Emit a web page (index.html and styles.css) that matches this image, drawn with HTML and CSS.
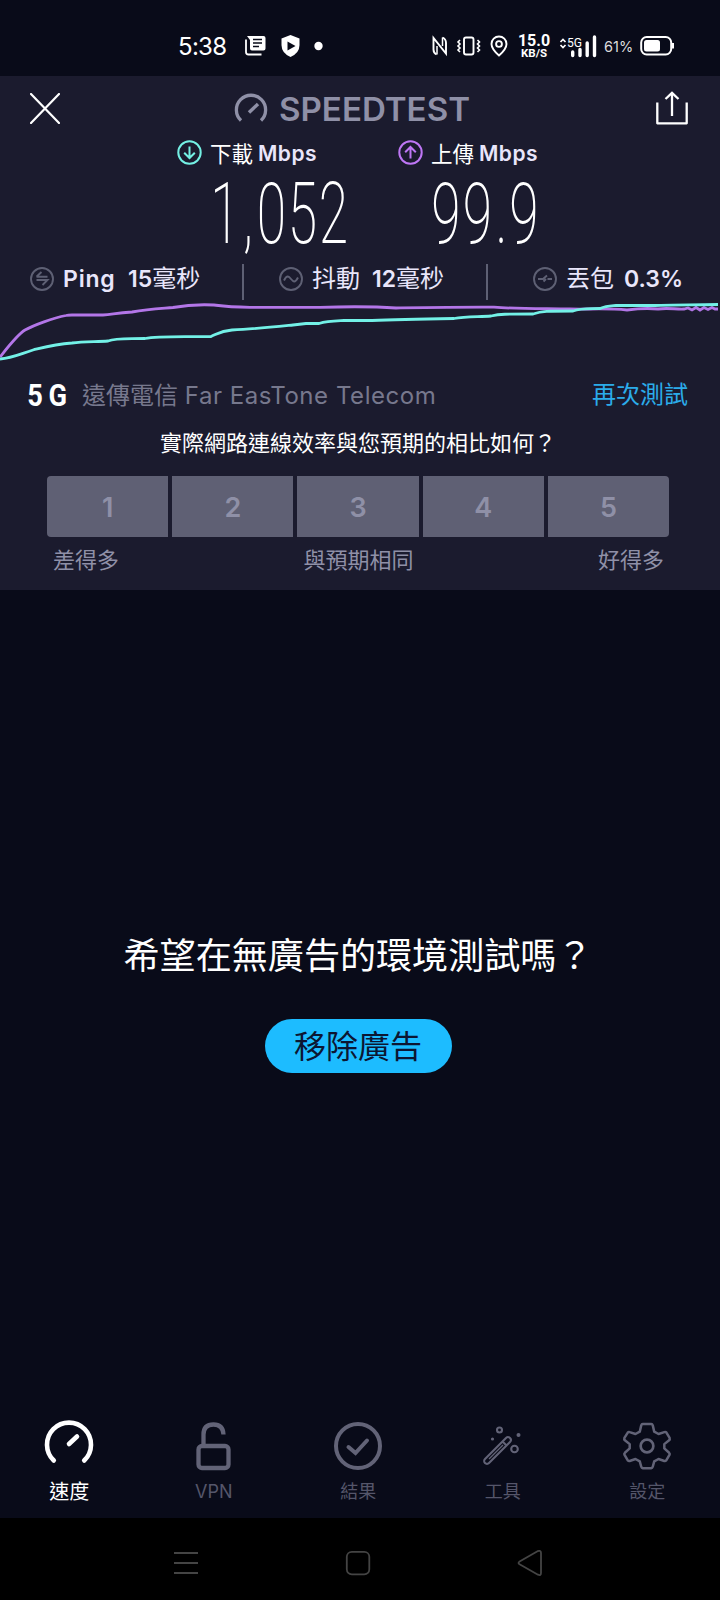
FILE: index.html
```html
<!DOCTYPE html>
<html lang="zh-Hant">
<head>
<meta charset="utf-8">
<title>Speedtest</title>
<link rel="stylesheet" href="styles.css">
</head>
<body>
<div class="status">
  <span class="clock">5:38</span>
  <svg class="left-icons" width="80" height="24" viewBox="0 0 80 24">
    <path d="M2 2H18.500Q20.500 2 20.500 4V14.500Q20.500 16.500 18.500 16.500H7Q5 16.500 5 14.500V6Z" fill="#fff"/>
    <path d="M8 5.500H17M8 9H17M8 12.500H14" stroke="#090b19" stroke-width="1.400"/>
    <path d="M1 5.500V18Q1 20.500 3.500 20.500H16.500" fill="none" stroke="#fff" stroke-width="1.800"/>
    <path d="M45.500 1L54.500 4.500V11Q54.500 19 45.500 23Q36.500 19 36.500 11V4.500Z" fill="#fff"/>
    <path d="M42.500 7.500L50.500 12L42.500 16.500Z" fill="#090b19"/>
    <circle cx="73.500" cy="12" r="4.200" fill="#fff"/>
  </svg>
  <svg class="right-icons" width="78" height="24" viewBox="0 0 78 24" fill="none" stroke="#fff" stroke-width="1.900">
    <path d="M4.500 20.500Q1.500 19 1.500 15.500V4L14 19.500V9Q14 5 10.500 3.500"/>
    <path d="M5 20.500V12M10.500 3.500V12" stroke-width="1.500"/>
    <rect x="32" y="3.500" width="9.500" height="17" rx="2"/>
    <path d="M28 6L26 8L28 10L26 12L28 14L26 16L28 18M45.500 6L47.500 8L45.500 10L47.500 12L45.500 14L47.500 16L45.500 18" stroke-width="1.600"/>
    <path d="M67 21.500Q59.500 15 59.500 10A7.500 7.500 0 0 1 74.500 10Q74.500 15 67 21.500Z"/>
    <circle cx="67" cy="10" r="2.900"/>
  </svg>
  <div class="rate"><b>15.0</b><span>KB/S</span></div>
  <svg class="signal" width="40" height="24" viewBox="0 0 40 24">
    <path d="M1.500 8L4 5.500L6.500 8M1.500 11L4 13.500L6.500 11" fill="none" stroke="#fff" stroke-width="1.700"/>
    <text x="8" y="12.500" class="net" textLength="15" lengthAdjust="spacingAndGlyphs">5G</text>
    <path d="M13.700 18V21.500M21 15.500V21.500M28.200 9V21.500M35.500 3V21.500" stroke="#fff" stroke-width="3.400" stroke-linecap="round"/>
  </svg>
  <span class="pct">61%</span>
  <svg width="35" height="22" viewBox="0 0 35 22">
    <rect x="1.200" y="2" width="30" height="17.500" rx="5.500" fill="none" stroke="#fff" stroke-width="2"/>
    <rect x="4" y="5" width="16" height="11.500" rx="2.500" fill="#fff"/>
    <path d="M33 8V13.500" stroke="#fff" stroke-width="2"/>
  </svg>
</div>

<section class="panel">
  <header class="head">
    <svg width="30" height="31" viewBox="0 0 30 31"><path d="M1 1L29 30M29 1L1 30" stroke="#fff" stroke-width="2.200" stroke-linecap="round"/></svg>
    <svg class="logo" width="246" height="40" viewBox="0 -2 246 40">
      <path d="M7 30.500A14.600 14.600 0 1 1 27 30.500" fill="none" stroke="#8f90a7" stroke-width="3.300"/>
      <path d="M15 22.500L24 14" stroke="#8f90a7" stroke-width="3.400"/>
      <text x="45" y="30.500" textLength="191" lengthAdjust="spacingAndGlyphs">SPEEDTEST</text>
    </svg>
    <svg width="32" height="34" viewBox="0 0 32 34" fill="none" stroke="#fff" stroke-width="2.300"><path d="M1.300 11.500V32.300H30.700V11.500M16 25V2" stroke-linejoin="round"/><path d="M9.500 8L16 1.800L22.500 8"/></svg>
  </header>

  <div class="speeds">
    <div class="speed down">
      <div class="label">
        <svg width="25" height="25" viewBox="0 0 25 25" fill="none" stroke="#74f0e4" stroke-width="2"><circle cx="12.500" cy="12.500" r="11.200"/><path d="M12.500 6.500V18M7.200 12.800L12.500 18L17.800 12.800"/></svg>
        <span>下載</span><b>Mbps</b>
      </div>
      <svg class="value" width="136" height="84" viewBox="0 0 136 84"><text transform="scale(.62 1)" x="-3 50 72 122 172" y="76">1,052</text></svg>
    </div>
    <div class="speed up">
      <div class="label">
        <svg width="25" height="25" viewBox="0 0 25 25" fill="none" stroke="#be76f5" stroke-width="2"><circle cx="12.500" cy="12.500" r="11.200"/><path d="M12.500 18.500V7M7.200 12.200L12.500 7L17.800 12.200"/></svg>
        <span>上傳</span><b>Mbps</b>
      </div>
      <svg class="value" width="106" height="84" viewBox="0 0 106 84"><text transform="scale(.62 1)" x="-3 48 101 123" y="76">99.9</text></svg>
    </div>
  </div>

  <div class="stats">
    <div class="stat ping">
      <svg width="24" height="24" viewBox="0 0 24 24"><circle cx="12" cy="12" r="11"/><path d="M6.500 9.800H17.500M6.500 9.800L11.500 5M6.500 13H17.500L12.500 18"/></svg>
      <b>Ping</b><span><b>15</b>毫秒</span>
    </div>
    <div class="stat jitter">
      <svg width="24" height="24" viewBox="0 0 24 24"><circle cx="12" cy="12" r="11"/><path d="M5 13.500C8 7.500 10 9.500 12 12S16 16.500 19 10.500"/></svg>
      <span>抖動</span><span><b>12</b>毫秒</span>
    </div>
    <div class="stat loss">
      <svg width="24" height="24" viewBox="0 0 24 24"><circle cx="12" cy="12" r="11"/><path d="M5 12H10L14 8.500M10.500 14.500L13 12M14.500 12H19"/></svg>
      <span>丟包</span><b>0.3%</b>
    </div>
  </div>

  <svg class="chart" width="720" height="66" viewBox="0 0 720 66">
    <path stroke="#b376e8" d="M0 57C8 47 17 35 25 30C34 25 53 18 66 15.500Q68 15 72 15H103C112 14.500 116 13 132 12C149 9 162 8.500 173 7.500C184 5.500 194 4 214 5C222 6 228 7 250 7.300H320C347 6.500 375 6.500 396 8C430 7.500 462 7 494 7.200C517 9 545 8.500 570 9C590 9.500 606 8 627 10C638 8.500 648 8 658 9C668 7.500 676 9.500 684 9L688 8L692 10L696 7.500L700 10L704 7.500L708 9.500L712 7.500L715 9H718"/>
    <path stroke="#73f1e7" d="M0 59C12 58 20 54 33 50C45 47 55 44 72 43C84 41 97 42 108 41C116 38 127 39 145 38.500C158 36 178 37 211 36.500C219 33 221 31 232 30C254 29 273 27 293 25L306 23.500H319C327 21 333 21 344 20.500H372C392 19.500 416 19 454 18.500C466 16 479 17 491 16C500 14 505 14 533 14C542 11 547 11 573 11C582 8 590 9 600 8.500C606 6 610 6 616 5.500H655C670 4.500 690 5 718 4.500"/>
  </svg>

  <div class="provider">
    <svg width="46" height="40" viewBox="0 0 46 40"><text class="fiveg" transform="scale(.85 1)" x="-1 24" y="31">5G</text></svg>
    <span class="isp">遠傳電信 <i>Far EasTone Telecom</i></span>
    <a class="again">再次測試</a>
  </div>

  <p class="question">實際網路連線效率與您預期的相比如何？</p>
  <div class="scale"><div>1</div><div>2</div><div>3</div><div>4</div><div>5</div></div>
  <div class="legend"><span>差得多</span><span>與預期相同</span><span>好得多</span></div>
</section>

<main class="ad">
  <h1>希望在無廣告的環境測試嗎？</h1>
  <button>移除廣告</button>
</main>

<nav class="tabs">
  <div class="tab active">
    <svg width="50" height="54" viewBox="0 0 50 54" fill="none" stroke="#fff" stroke-width="4.600" stroke-linecap="round"><path d="M9.800 40.500A22 22 0 1 1 40.200 40.500M25 24L33 16.500"/></svg>
    <span>速度</span>
  </div>
  <div class="tab">
    <svg width="50" height="54" viewBox="0 0 50 54" fill="none" stroke="#626377" stroke-width="4.300"><rect x="9.500" y="26" width="30" height="22" rx="3.500"/><path d="M14.500 26V14.500Q14.500 4.500 24.500 4.500Q34 4.500 34.500 14.500"/></svg>
    <span>VPN</span>
  </div>
  <div class="tab">
    <svg width="50" height="54" viewBox="0 0 50 54" fill="none" stroke="#626377" stroke-width="4"><circle cx="25" cy="26" r="22"/><path d="M15.500 27L22.500 33L34 20.500" stroke-linecap="round"/></svg>
    <span>結果</span>
  </div>
  <div class="tab">
    <svg width="50" height="54" viewBox="0 0 50 54" fill="none" stroke="#626377" stroke-width="2.100"><path d="M7 39L28 18A2.700 2.700 0 0 1 32 22L11 43A2.700 2.700 0 0 1 7 39ZM24.500 21.500L28.500 25.500"/><path d="M11 39L25 25" stroke-width="1.200"/><circle cx="21.500" cy="10" r="2.500"/><circle cx="36.500" cy="29" r="3.300"/><circle cx="40.500" cy="15" r="2" fill="#626377" stroke="none"/><circle cx="14.500" cy="19" r="1.600" fill="#626377" stroke="none"/></svg>
    <span>工具</span>
  </div>
  <div class="tab">
    <svg width="50" height="54" viewBox="-1 -1 52 56" fill="none" stroke="#626377" stroke-width="2.600" stroke-linejoin="round"><path d="M20.500 3H29.500Q30.500 3 31 4.500L32.500 11L37 13.500L43 11.500Q44.500 11 45.200 12L48.500 17.500Q49 19 48 20L43 24V28.500L48 33Q49 34 48.500 35L45 41Q44 42 43 41.500L37 39.500L32.500 42L31 47.500Q30.500 49 29.500 49H20.500Q19.500 49 19 47.500L17.500 42L13 39.500L7 41.500Q6 42 5 41L1.500 35Q1 34 2 33L7 28.500V24L2 20Q1 19 1.500 17.500L5 12Q5.800 11 7 11.500L13 13.500L17.500 11L19 4.500Q19.500 3 20.500 3Z"/><circle cx="25" cy="26" r="6.600" stroke-width="2.800"/></svg>
    <span>設定</span>
  </div>
</nav>

<footer class="sysnav">
  <svg width="26" height="28" viewBox="0 0 26 28" fill="none" stroke="#444" stroke-width="1.800"><path d="M1 3H25M1 13H25M1 23H25"/></svg>
  <svg width="26" height="28" viewBox="0 0 26 28" fill="none" stroke="#444" stroke-width="1.800"><rect x="1.800" y="1.800" width="22.500" height="22.500" rx="5"/></svg>
  <svg width="26" height="28" viewBox="0 0 26 28" fill="none" stroke="#444" stroke-width="1.800" stroke-linejoin="round"><path d="M3 11.300L20.500 1.200Q24 0 24 3V23Q24 26 21 24.700L3 14.500Q0 13 3 11.300Z"/></svg>
</footer>
</body>
</html>
```
FILE: styles.css
```css
* { box-sizing: border-box; }
body {
  margin: 0;
  width: 720px;
  height: 1600px;
  display: flex;
  flex-direction: column;
  overflow: hidden;
  background: #090b19;
  color: #fff;
  font-family: Inter, "Noto Sans CJK TC", sans-serif;
}
svg { display: block; flex: none; }
b { font-weight: 500; }
i { font-style: normal; }

.status { height: 76px; display: flex; align-items: center; padding: 16px 0 0 178px; }
.clock { width: 67px; font-size: 24px; line-height: 30px; letter-spacing: -.7px; padding-top: 1px; }
.left-icons { margin-right: 107px; }
.right-icons { margin-right: 7px; }
.rate { width: 34px; display: flex; flex-direction: column; align-items: center; font-family: Roboto, sans-serif; font-weight: 700; white-space: nowrap; }
.rate b { font-size: 16px; line-height: 13px; font-weight: 700; }
.rate span { font-size: 11.500px; line-height: 12px; }
.signal { margin: 0 5px 0 8px; }
.net { font: 13px Roboto, sans-serif; fill: #fff; }
.pct { width: 36px; font-size: 14.500px; line-height: 20px; color: #ddd; padding-top: 1px; }

.panel { height: 514px; background: #1b1b2e; display: flex; flex-direction: column; flex: none; }
.head { height: 62px; flex: none; display: flex; align-items: center; padding: 2px 32px 0 30px; }
.logo { margin: 0 auto 0 174px; }
.logo text { font-size: 32px; font-weight: 600; fill: #8f90a7; }

.speeds { height: 122px; flex: none; display: flex; padding-left: 177px; }
.speed { width: 221px; }
.label { height: 29px; display: flex; align-items: center; font-size: 21.500px; white-space: nowrap; }
.label span { margin-left: 8px; width: 48px; }
.label b { padding-top: 2px; font-size: 21px; font-weight: 600; letter-spacing: .5px; color: #e9e6fb; }
.value { margin-left: 35px; overflow: visible; }
.value text { font-family: Roboto, sans-serif; font-weight: 200; font-size: 86px; fill: #fff; }

.stats { height: 40px; flex: none; display: flex; padding-left: 30px; }
.stat { height: 36px; margin-top: 4px; display: flex; align-items: center; font-size: 24px; color: #e9e6fb; white-space: nowrap; padding-bottom: 6px; }
.stat span { margin-bottom: 5px; }
.stat b { font-size: 23px; font-weight: 600; letter-spacing: 0; }
.stat svg { fill: none; stroke: #5e6074; stroke-width: 1.900; margin-right: 9px; }
.ping { width: 214px; border-right: 2px solid #5e6074; }
.ping > b { width: 65px; letter-spacing: .8px; }
.jitter { width: 244px; padding-left: 35px; border-right: 2px solid #5e6074; }
.jitter > span:first-of-type { width: 60px; }
.loss { padding-left: 45px; }
.loss > span { width: 58px; }

.chart { fill: none; stroke-width: 2.800; }
.provider { height: 58px; flex: none; display: flex; align-items: center; padding: 0 32px 0 28px; }
.fiveg { font: 700 32px Roboto, sans-serif; fill: #fff; }
.isp { margin-left: 8px; padding-top: 1px; flex: 1; font-size: 24px; line-height: 34px; color: #77788d; white-space: nowrap; }
.isp i { letter-spacing: .550px; }
.again { font-size: 24px; line-height: 34px; color: #2bacea; }
.question { margin: 0; height: 52px; line-height: 38px; font-size: 22px; text-align: center; padding-right: 4px; }
.scale { height: 61px; flex: none; margin: 0 51px 0 47px; display: grid; grid-template-columns: repeat(5, 1fr); gap: 4px; }
.scale div { background: #5f6074; color: #8f90a7; display: grid; place-items: center; padding-top: 2px; font-size: 27px; font-weight: 600; }
.scale div:first-child { border-radius: 4px 0 0 4px; }
.scale div:last-child { border-radius: 0 4px 4px 0; }
.legend { margin: 7px 56px 0 53px; display: flex; justify-content: space-between; font-size: 22px; line-height: 32px; color: #8f90a7; }

.ad { height: 820px; flex: none; display: flex; flex-direction: column; align-items: center; padding: 340px 4px 0 0; }
h1 { margin: 0; font-size: 36.100px; line-height: 52px; font-weight: 400; }
.ad button { margin: 37px 0 0; width: 187px; height: 54px; padding: 0 0 4px; border: 0; border-radius: 27px; background: #1dbcff; color: #0c1632; font: 32px/50px "Noto Sans CJK TC", sans-serif; }

.tabs { height: 108px; flex: none; display: grid; grid-template-columns: repeat(5, 144.500px); margin-left: -3px; padding-top: 10px; }
.tab { display: flex; flex-direction: column; align-items: center; font-size: 18px; line-height: 36px; color: #55566a; }
.tab.active { color: #fff; font-size: 20px; }
.sysnav { height: 82px; flex: none; display: flex; gap: 146px; padding: 32px 0 0 173px; background: #000; }
```
